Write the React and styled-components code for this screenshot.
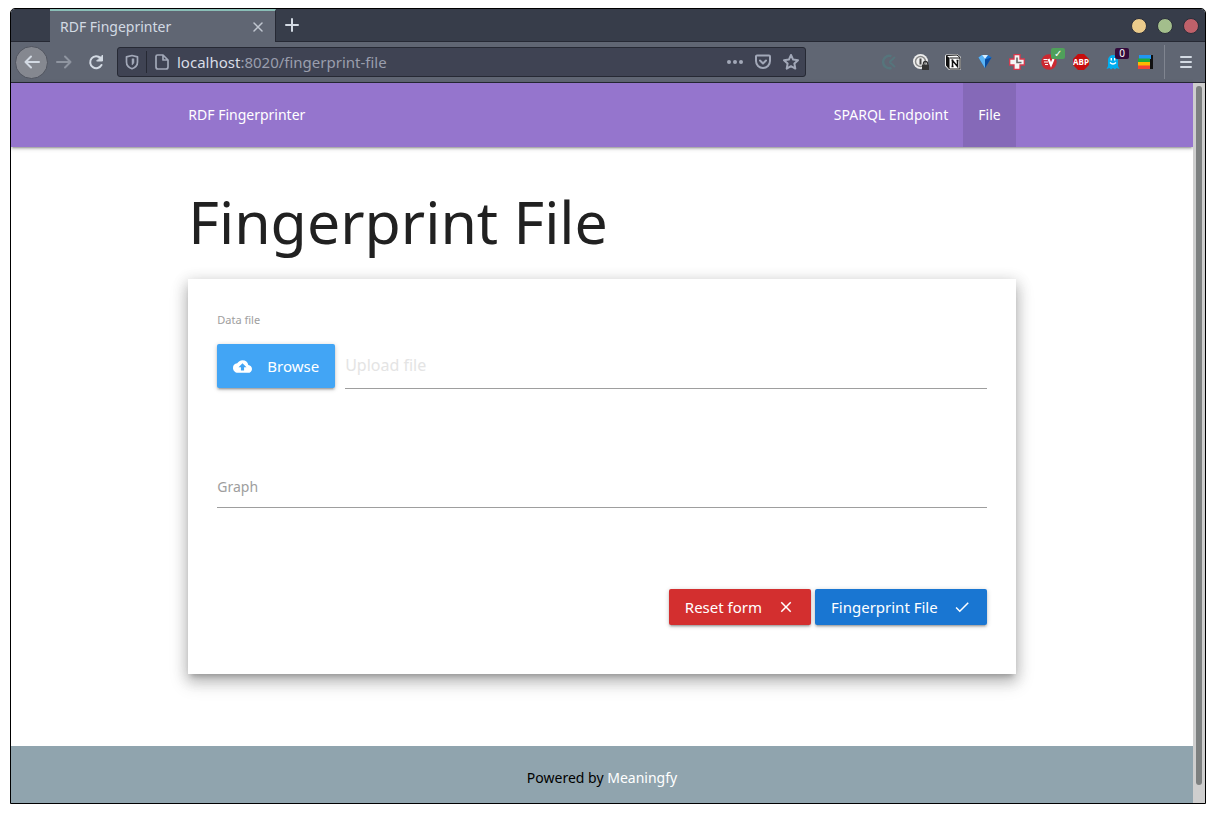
import React from "react";
import styled, { createGlobalStyle } from "styled-components";
import { MdCloudUpload, MdClose, MdCheck } from "react-icons/md";

const Global = createGlobalStyle`
  * { box-sizing: border-box; }
  body { margin: 0; background: #fff; font-family: "Noto Sans", "Open Sans", sans-serif; }
  button, input { font-family: inherit; }
`;

const Desktop = styled.div`
  min-height: 100vh;
  padding: 8px 10px 10px;
  display: flex;
`;
const Window = styled.div`
  flex: 1;
  min-width: 0;
  display: flex;
  flex-direction: column;
  border: 1px solid #000;
  border-radius: 5px 5px 0 0;
  overflow: hidden;
`;

/* Title bar with tabs */
const TabBar = styled.header`
  display: flex;
  align-items: stretch;
  height: 33px;
  padding-left: 39px;
  background: #373d4a;
  border-bottom: 1px solid #262934;
`;
const Tab = styled.div`
  display: flex;
  align-items: center;
  justify-content: space-between;
  width: 226px;
  height: 33px;
  padding: 0 9px 0 10px;
  background: #606673;
  border-top: 2px solid #8abeb7;
  border-right: 1px solid #262934;
  color: #d3dae3;
  font-size: 14px;
  line-height: 20px;
`;
const IconButton = styled.button`
  display: flex;
  align-items: center;
  justify-content: center;
  flex: none;
  width: ${(p) => p.$w || 32}px;
  height: ${(p) => p.$h || 32}px;
  padding: 0;
  border: 0;
  background: none;
  color: ${(p) => p.$color || "#d3dae3"};
`;
const WindowControls = styled.div`
  display: flex;
  align-items: center;
  gap: 10px;
  margin-left: auto;
  padding: 2px 6px 0 0;
`;
const Dot = styled.button`
  width: 16px;
  height: 16px;
  padding: 0;
  border: 1px solid #2a2e3a;
  border-radius: 50%;
  background: ${(p) => p.$color};
`;

/* Navigation toolbar */
const Toolbar = styled.div`
  display: flex;
  align-items: center;
  height: 41px;
  padding-left: 4px;
  background: #606673;
  border-bottom: 1px solid #262934;
`;
const BackButton = styled(IconButton)`
  border: 1px solid #50545f;
  border-radius: 50%;
  background: #858890;
`;
const AddressBar = styled.div`
  display: flex;
  align-items: center;
  flex: 0 1 689px;
  height: 30px;
  margin-left: 5px;
  border: 1px solid #262934;
  border-radius: 3px;
  background: #3f4353;
  color: #a2a8b8;
`;
const Divider = styled.span`
  width: 1px;
  height: 22px;
  background: #262934;
`;
const Url = styled.span`
  flex: 1;
  min-width: 0;
  font-size: 15px;
  line-height: 20px;
  color: #9a9ead;
  white-space: nowrap;
  overflow: hidden;
`;
const Host = styled.b`
  font-weight: 400;
  color: #d9dde6;
`;
const Extensions = styled.div`
  display: flex;
  align-items: center;
  margin-left: auto;
`;
const Extension = styled(IconButton)`
  position: relative;
`;
const Badge = styled.span`
  position: absolute;
  top: 2px;
  right: 0;
  width: 14px;
  height: 11px;
  border-radius: 2px;
  background: ${(p) => p.$color};
  color: #fff;
  font-size: 10px;
  line-height: 11px;
  text-align: center;
`;
const MenuSlot = styled.div`
  display: flex;
  align-items: center;
  height: 34px;
  margin-left: 3px;
  padding: 0 3px 0 5px;
  border-left: 1px solid #808590;
`;

/* Page */
const Viewport = styled.div`
  flex: 1;
  display: flex;
`;
const Page = styled.div`
  flex: 1;
  min-width: 0;
  display: flex;
  flex-direction: column;
  background: #fff;
`;
const ScrollTrack = styled.div`
  width: 12px;
  display: flex;
  padding: 3px 3px 18px;
  background: #cecece;
`;
const ScrollThumb = styled.div`
  flex: 1;
  border-radius: 3px;
  background: #7d8080;
`;
const Container = styled.div`
  width: 70%;
  margin: 0 auto;
`;
const Nav = styled.nav`
  background: #9575cd;
  box-shadow: 0 2px 2px 0 rgba(0, 0, 0, 0.14), 0 3px 1px -2px rgba(0, 0, 0, 0.12),
    0 1px 5px 0 rgba(0, 0, 0, 0.2);
`;
const NavRow = styled(Container)`
  display: flex;
  justify-content: space-between;
  line-height: 64px;
`;
const NavLinks = styled.div`
  display: flex;
`;
const NavLink = styled.a`
  padding: 0 ${(p) => (p.$brand ? 0 : 15)}px;
  background: ${(p) => (p.$active ? "rgba(0, 0, 0, 0.1)" : "transparent")};
  color: #fff;
  font-size: 14px;
  text-decoration: none;
`;
const Main = styled(Container)`
  flex: 1;
  padding-bottom: 72px;
`;
const Title = styled.h1`
  margin: 40px 0 24px;
  color: #212121;
  font-size: 59px;
  font-weight: 400;
  line-height: 68px;
`;
const Card = styled.form`
  padding: 29px 29px 49px;
  background: #fff;
  box-shadow: 0 8px 17px 2px rgba(0, 0, 0, 0.14), 0 3px 14px 2px rgba(0, 0, 0, 0.12),
    0 5px 5px -3px rgba(0, 0, 0, 0.2), 0 8px 12px 0 rgba(0, 0, 0, 0.08);
`;
const Label = styled.label`
  display: block;
  color: #9e9e9e;
  font-size: ${(p) => (p.$small ? 11 : 14)}px;
  line-height: 24px;
`;
const FileRow = styled.div`
  display: flex;
  gap: 10px;
  margin-top: 12px;
`;
const TextInput = styled.input`
  flex: 1;
  display: block;
  width: 100%;
  min-width: 0;
  height: ${(p) => p.$h}px;
  padding: 0 0 2px;
  border: 0;
  border-bottom: 1px solid #9e9e9e;
  outline: 0;
  background: transparent;
  font-size: 16px;
  &::placeholder { color: #e4e4e4; opacity: 1; }
`;
const GraphField = styled.div`
  margin-top: 86px;
`;
const Button = styled.button`
  display: flex;
  align-items: center;
  gap: 15px;
  height: ${(p) => (p.$tall ? 44 : 36)}px;
  padding: 0 16px;
  border: 0;
  border-radius: 2px;
  background: ${(p) => p.$color};
  color: #fff;
  font-size: 15px;
  line-height: 20px;
  white-space: nowrap;
  box-shadow: 0 2px 2px 0 rgba(0, 0, 0, 0.14), 0 3px 1px -2px rgba(0, 0, 0, 0.12),
    0 1px 5px 0 rgba(0, 0, 0, 0.2);
`;
const Actions = styled.div`
  display: flex;
  justify-content: flex-end;
  gap: 4px;
  margin-top: 81px;
`;
const Footer = styled.footer`
  padding: 20px 0 13px;
  background: #90a4ae;
  color: #000;
  font-size: 14px;
  line-height: 24px;
  text-align: center;
`;
const FooterLink = styled.a`
  color: #fff;
  text-decoration: none;
`;

const Line = ({ children, size = 16, width = 2 }) => (
  <svg width={size} height={size} viewBox="0 0 16 16" fill="none" stroke="currentColor" strokeWidth={width} strokeLinecap="round" strokeLinejoin="round" aria-hidden="true">
    {children}
  </svg>
);

const extensions = [
  { name: "Clockify", art: <g fill="none" stroke="#56757c" strokeWidth="2.4"><path d="M10.500 2.200A6.200 6.200 0 1 0 10.500 13.800" /><path d="M8.500 8l5.500-5M8.500 8l5.500 5" strokeWidth="2" /></g> },
  { name: "Password manager", art: <g><circle cx="7.500" cy="7.500" r="7.500" fill="#eee" /><circle cx="7.500" cy="7.500" r="5" fill="#eee" stroke="#888" strokeWidth="1.500" /><path d="M7.500 4.500v6" stroke="#444" strokeWidth="2" /><path d="M9 10.500h7V16H9z" fill="#333" /><path d="M10.500 10.500V9.500a2 2 0 0 1 4 0v1" fill="none" stroke="#333" strokeWidth="1.400" /></g> },
  { name: "Notion", art: <g><path d="M0 1.500L1 .500 12 0l4 3v12l-1 1H4l-4-4z" fill="#eee" /><path d="M1.500 1.500L12 1l3 2.500V15H4.500l-3-3.500z" fill="#fff" stroke="#111" /><path d="M1.500 1.500l3 2.500v11l-3-3.500z" fill="#111" /><path d="M4.500 4H15" stroke="#111" /><path d="M7.500 12.500v-6l5 6v-6M6.500 6.500h2M11.500 6.500h2M6.500 12.500h2" stroke="#111" strokeWidth="1.500" fill="none" /></g> },
  { name: "Diamond", art: <g><path d="M1.500 3.500L5 1h6l3.500 2.500L8 14z" fill="#1672d2" /><path d="M1.500 3.500L5 1l3 4v9z" fill="#5ab4f5" /><path d="M5 1h6L8 5z" fill="#d6efff" /><path d="M14.500 3.500L8 5.500V14z" fill="#0a4a9c" /></g> },
  { name: "Cross", art: <g><path d="M5 .700h6V5h4.300v6H11v4.300H5V11H.700V5H5z" fill="#f5f5f5" stroke="#d8384c" strokeWidth="1.300" /><path d="M8 3.500v5h4.500" fill="none" stroke="#666" strokeWidth="1.600" /></g> },
  { name: "Video", badge: "✓", badgeColor: "#4fa05a", art: <g><circle cx="8" cy="8" r="7.700" fill="#cc2931" /><path d="M2.500 5.500h4M3 8h4M4 10.500h3" stroke="#fff" strokeWidth="1.200" /><path d="M7.500 5l2.500 6 2.500-6" fill="none" stroke="#fff" strokeWidth="2.200" /></g> },
  { name: "Adblock", art: <g><path d="M5 0h6l5 5v6l-5 5H5l-5-5V5z" fill="#c70d0d" /><text x="8" y="11" textAnchor="middle" fontFamily="Open Sans, sans-serif" fontSize="8" fontWeight="700" fill="#fff">ABP</text></g> },
  { name: "Ghostery", badge: "0", badgeColor: "#330a3c", art: <g><path d="M3 12V6a5 5 0 0 1 10 0v6l1.500 3-3-1-1.500 1.500-2-1.500-2 1.500L4.500 14l-3 1z" fill="#00aef0" /><path d="M6.300 4v2.500M9.700 4v2.500M5 8.500q3 3 6 0" fill="none" stroke="#fff" strokeWidth="1.400" /></g> },
  { name: "Layers", art: <g><path d="M12 1h4v14h-4z" fill="#111" /><path d="M2 1h12v4H2z" fill="#2196f3" /><path d="M1 4.500h12V8H1z" fill="#1faa3c" /><path d="M1 8h12v4H1z" fill="#ffb800" /><path d="M1 11.500h12V15H1z" fill="#f44336" /></g> },
];

export default function App() {
  return (
    <>
      <Global />
      <Desktop>
        <Window>
          <TabBar>
            <Tab>
              <span>RDF Fingeprinter</span>
              <IconButton $w={16} $h={16} $color="#c0c6d0" aria-label="Close tab"><Line width={1.5}><path d="M4 4l8 8M12 4l-8 8" /></Line></IconButton>
            </Tab>
            <IconButton aria-label="New tab"><Line><path d="M8 2v12M2 8h12" /></Line></IconButton>
            <WindowControls>
              <Dot $color="#ebcb8b" aria-label="Minimize" />
              <Dot $color="#a3be8c" aria-label="Maximize" />
              <Dot $color="#bf616a" aria-label="Close" />
            </WindowControls>
          </TabBar>
          <Toolbar>
            <BackButton $w={33} $h={33} aria-label="Back"><Line><path d="M15 8H1.500M7 2.500L1.500 8 7 13.500" /></Line></BackButton>
            <IconButton $color="#8f95a0" aria-label="Forward"><Line><path d="M1 8h13.500M9 2.500L14.500 8 9 13.500" /></Line></IconButton>
            <IconButton aria-label="Reload"><Line><path d="M13.500 11A6 6 0 1 1 12.500 4" /><path d="M14.500 1.500V7H9z" fill="currentColor" strokeWidth="1" /></Line></IconButton>
            <AddressBar>
              <IconButton $w={28} $h={28} $color="#a2a8b8" aria-label="Tracking protection"><Line width={1.7}><path d="M8 1.500l5.500 1.300V8c0 3-2 5.500-5.500 6.700C4.500 13.500 2.500 11 2.500 8V2.800z" /><path d="M8 5v6c1.500-1 2-2 2-3V5z" fill="currentColor" strokeWidth="0.500" /></Line></IconButton>
              <Divider />
              <IconButton $w={30} $h={28} $color="#a2a8b8" aria-label="Site information"><Line width={1.7}><path d="M3.500 1H9l5 5v7a2 2 0 0 1-2 2H4a2 2 0 0 1-2-2V2.500A1.500 1.500 0 0 1 3.500 1zM9 1v5h5" /></Line></IconButton>
              <Url><Host>localhost</Host>:8020/fingerprint-file</Url>
              <IconButton $w={28} $h={28} $color="#a2a8b8" aria-label="Page actions"><Line><g fill="currentColor" stroke="none"><circle cx="2" cy="8" r="2" /><circle cx="8" cy="8" r="2" /><circle cx="14" cy="8" r="2" /></g></Line></IconButton>
              <IconButton $w={28} $h={28} $color="#a2a8b8" aria-label="Save to Pocket"><Line><path d="M2 1.500h12a1 1 0 0 1 1 1V7a7 7 0 0 1-14 0V2.500a1 1 0 0 1 1-1zM5 6.500l3 3 3-3" /></Line></IconButton>
              <IconButton $w={28} $h={28} $color="#a2a8b8" aria-label="Bookmark"><Line><path d="M8 1l2.100 4.600 4.900.6-3.600 3.400.9 5L8 12.200l-4.300 2.400.9-5L1 6.200l4.900-.6z" /></Line></IconButton>
            </AddressBar>
            <Extensions>
              {extensions.map((e) => (
                <Extension key={e.name} aria-label={e.name}>
                  <svg width="16" height="16" viewBox="0 0 16 16" aria-hidden="true">{e.art}</svg>
                  {e.badge && <Badge $color={e.badgeColor}>{e.badge}</Badge>}
                </Extension>
              ))}
            </Extensions>
            <MenuSlot>
              <IconButton aria-label="Menu"><Line><path d="M3 3h10M3 8h10M3 13h10" /></Line></IconButton>
            </MenuSlot>
          </Toolbar>
          <Viewport>
            <Page>
              <Nav>
                <NavRow>
                  <NavLink $brand href="#home">RDF Fingerprinter</NavLink>
                  <NavLinks>
                    <NavLink href="#sparql">SPARQL Endpoint</NavLink>
                    <NavLink $active href="#file">File</NavLink>
                  </NavLinks>
                </NavRow>
              </Nav>
              <Main as="main">
                <Title>Fingerprint File</Title>
                <Card>
                  <Label $small htmlFor="data-file">Data file</Label>
                  <FileRow>
                    <Button type="button" $tall $color="#42a5f5"><MdCloudUpload size={19} />Browse</Button>
                    <TextInput $h={45} id="data-file" placeholder="Upload file" />
                  </FileRow>
                  <GraphField>
                    <Label htmlFor="graph">Graph</Label>
                    <TextInput $h={9} id="graph" />
                  </GraphField>
                  <Actions>
                    <Button type="reset" $color="#d32f2f">Reset form<MdClose size={18} /></Button>
                    <Button type="button" $color="#1976d2">Fingerprint File<MdCheck size={18} /></Button>
                  </Actions>
                </Card>
              </Main>
              <Footer>Powered by <FooterLink href="#meaningfy">Meaningfy</FooterLink></Footer>
            </Page>
            <ScrollTrack><ScrollThumb /></ScrollTrack>
          </Viewport>
        </Window>
      </Desktop>
    </>
  );
}
